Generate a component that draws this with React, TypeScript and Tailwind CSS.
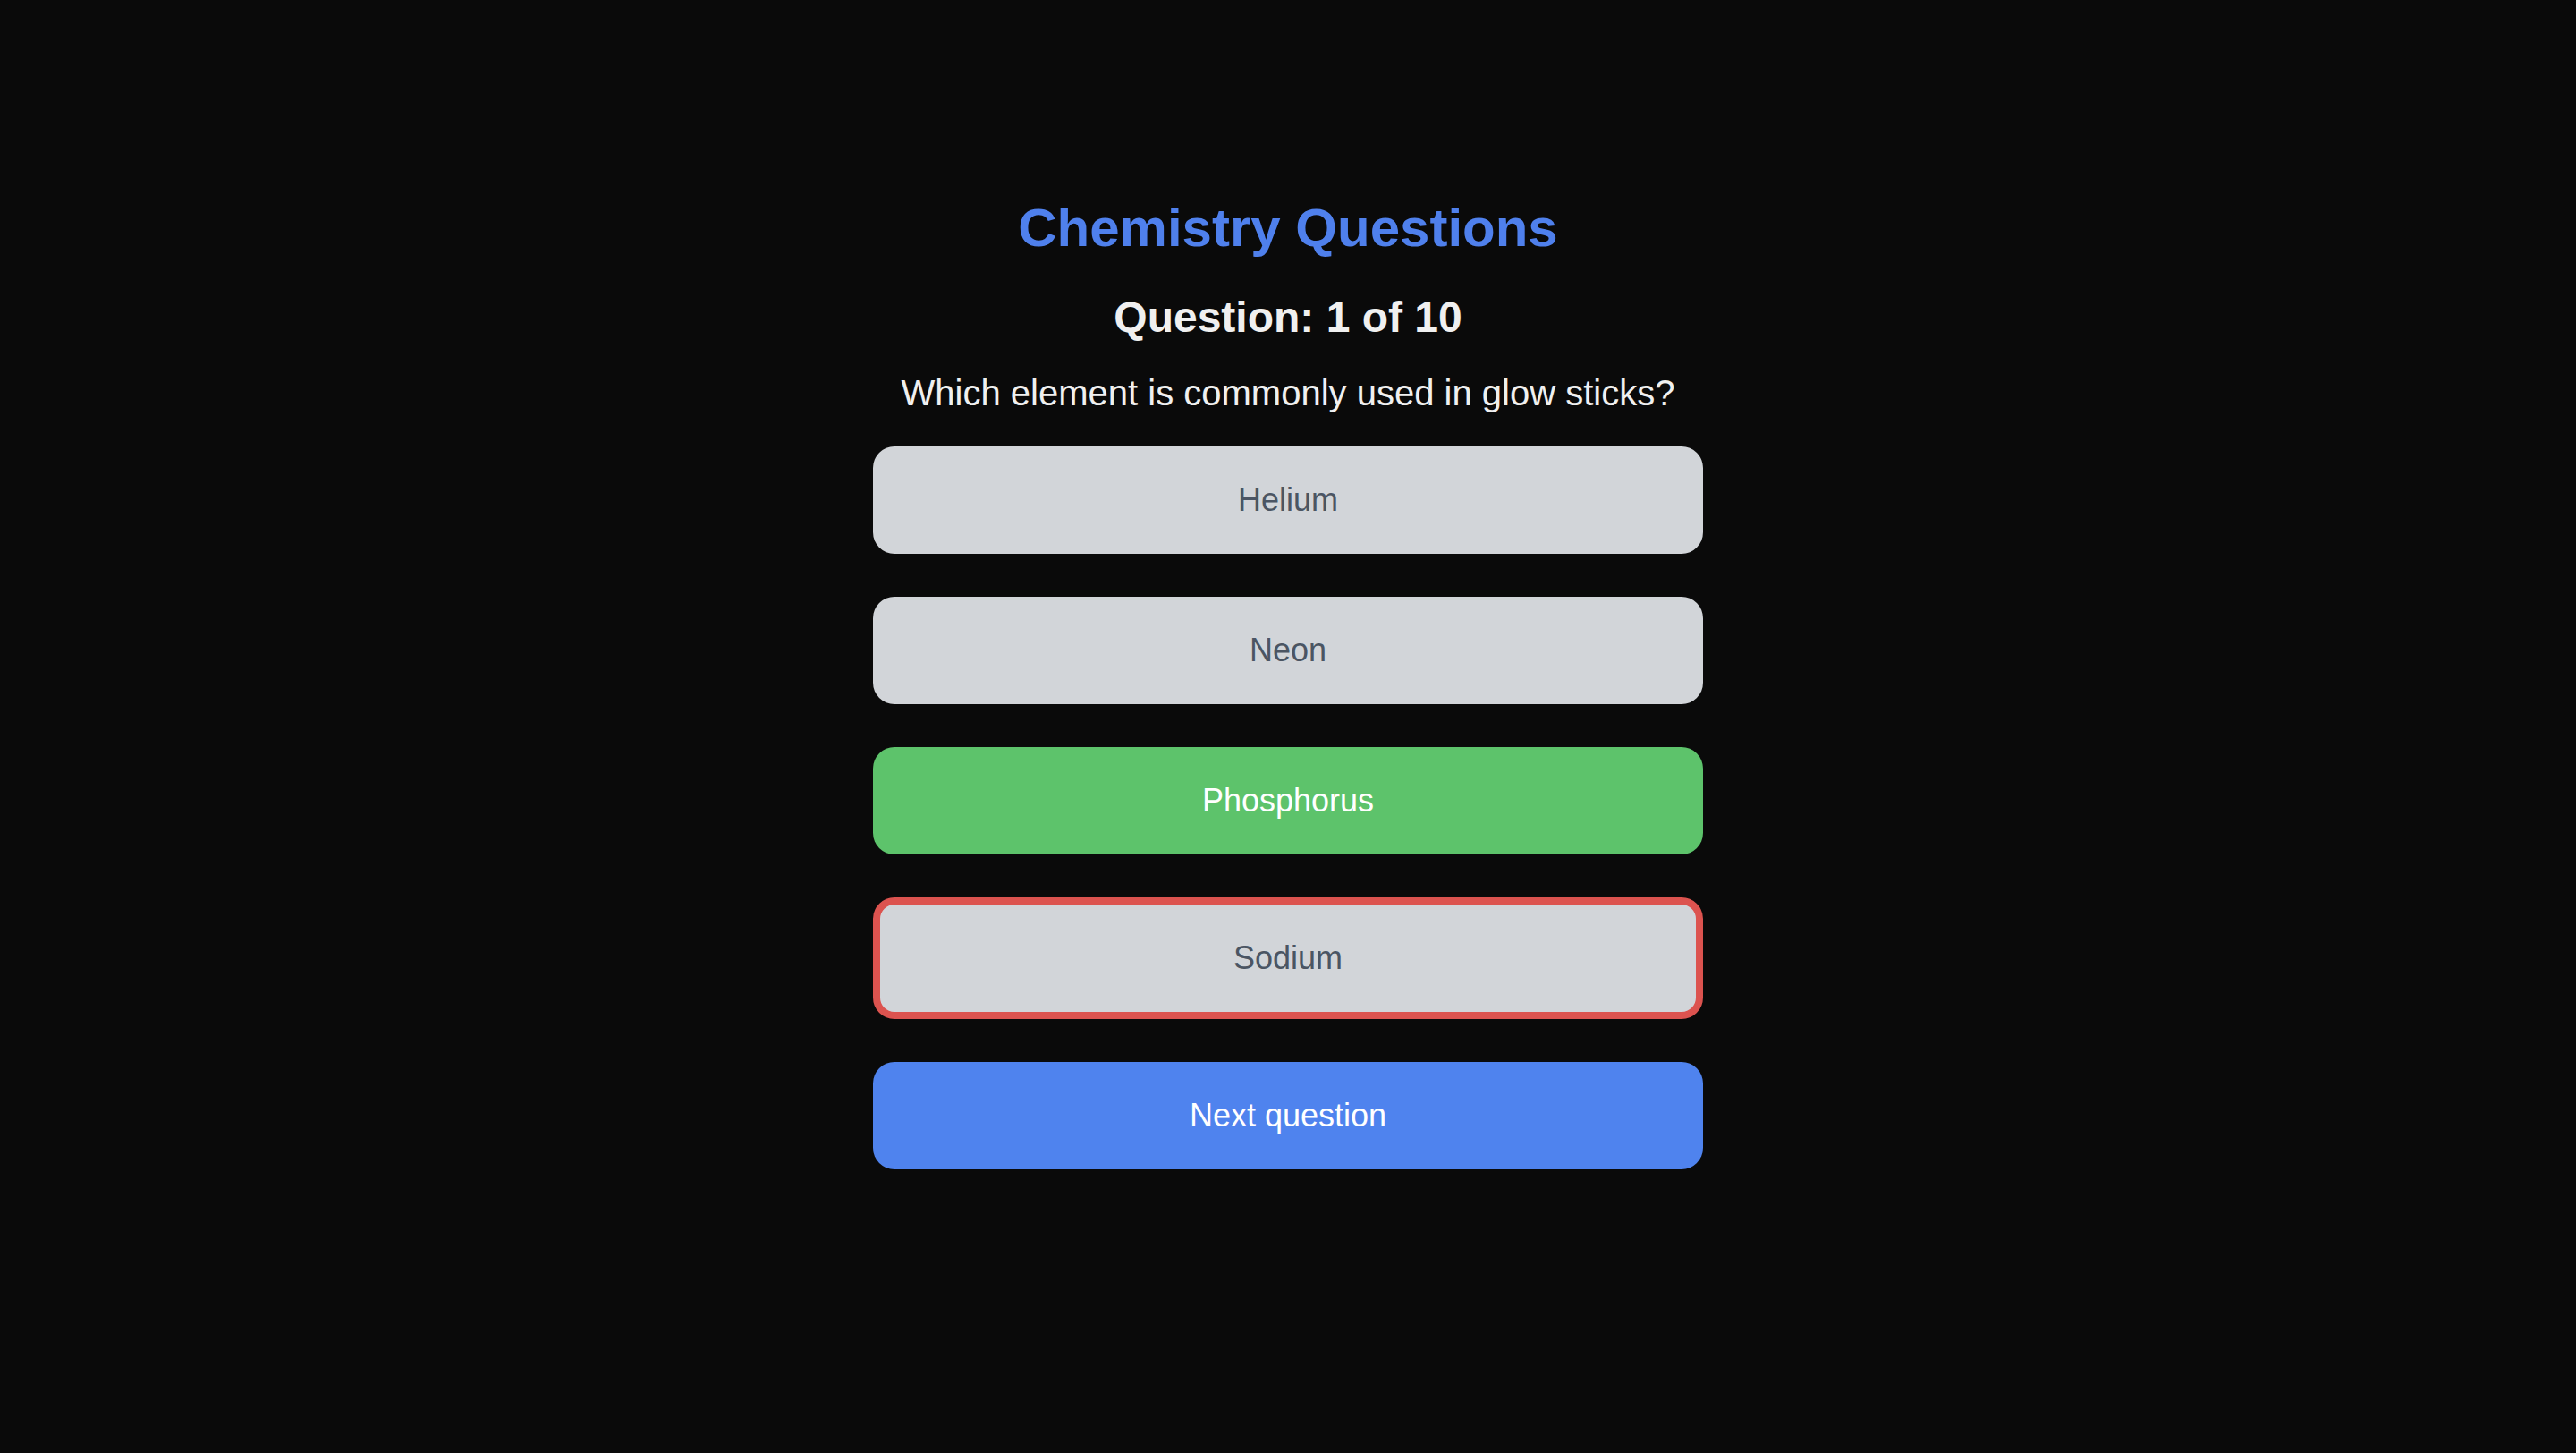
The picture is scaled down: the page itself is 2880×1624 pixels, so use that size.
import { useState } from 'react';

type Option = {
  label: string;
  state: 'idle' | 'correct' | 'wrong';
};

const options: Option[] = [
  { label: 'Helium', state: 'idle' },
  { label: 'Neon', state: 'idle' },
  { label: 'Phosphorus', state: 'correct' },
  { label: 'Sodium', state: 'wrong' },
];

export default function App() {
  const [current] = useState(1);
  const total = 10;

  const optionClass = (state: Option['state']) => {
    if (state === 'correct') return 'bg-[#5dc36b] text-white';
    if (state === 'wrong') return 'bg-[#d2d5d9] text-[#4b5563] border-8 border-[#dc534f]';
    return 'bg-[#d2d5d9] text-[#4b5563]';
  };

  return (
    <div
      className="min-h-screen bg-[#0a0a0a] pt-[219px]"
      style={{ fontFamily: '"Liberation Sans", Arial, sans-serif' }}
    >
      <div className="mx-auto flex w-[928px] flex-col items-center">
        <h1 className="mb-8 text-[60px] leading-[72px] font-bold text-[#4f80ec]">Chemistry Questions</h1>
        <h2 className="mb-6 text-[48px] leading-[64px] font-bold text-[#f0f0f0]">
          Question: {current} of {total}
        </h2>
        <p className="mb-8 text-[40px] leading-[56px] text-[#f0f0f0]">
          Which element is commonly used in glow sticks?
        </p>

        <div className="flex w-full flex-col gap-12">
          {options.map((option) => (
            <button
              key={option.label}
              className={`w-full rounded-3xl py-8 text-center text-[36px] leading-[56px] ${optionClass(option.state)}`}
            >
              {option.label}
            </button>
          ))}
          <button className="w-full rounded-3xl bg-[#4f83ee] py-8 text-center text-[36px] leading-[56px] text-white">
            Next question
          </button>
        </div>
      </div>
    </div>
  );
}
